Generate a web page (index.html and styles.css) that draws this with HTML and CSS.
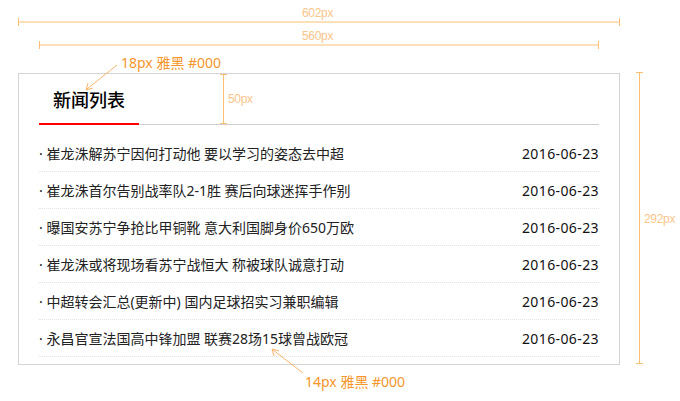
FILE: index.html
```html
<!DOCTYPE html>
<html lang="zh-CN">
<head>
<meta charset="utf-8">
<title>新闻列表</title>
<link rel="stylesheet" href="styles.css">
</head>
<body>
<div class="page">
  <div class="box">
    <div class="head">
      <h2 class="tab">新闻列表</h2>
    </div>
    <ul class="list">
      <li class="row"><span class="title">· 崔龙洙解苏宁因何打动他 要以学习的姿态去中超</span><span class="date">2016-06-23</span></li>
      <li class="row"><span class="title">· 崔龙洙首尔告别战率队2-1胜 赛后向球迷挥手作别</span><span class="date">2016-06-23</span></li>
      <li class="row"><span class="title">· 曝国安苏宁争抢比甲铜靴 意大利国脚身价650万欧</span><span class="date">2016-06-23</span></li>
      <li class="row"><span class="title">· 崔龙洙或将现场看苏宁战恒大 称被球队诚意打动</span><span class="date">2016-06-23</span></li>
      <li class="row"><span class="title">· 中超转会汇总(更新中) 国内足球招实习兼职编辑</span><span class="date">2016-06-23</span></li>
      <li class="row"><span class="title">· 永昌官宣法国高中锋加盟 联赛28场15球曾战欧冠</span><span class="date">2016-06-23</span></li>
    </ul>
  </div>
</div>
<svg class="notes" width="680" height="401" viewBox="0 0 680 401" xmlns="http://www.w3.org/2000/svg">
  <g class="dim">
    <line x1="18" y1="22" x2="619" y2="22"/>
    <line x1="18.5" y1="18" x2="18.5" y2="26"/>
    <line x1="619.5" y1="18" x2="619.5" y2="26"/>
    <line x1="39" y1="45" x2="598" y2="45"/>
    <line x1="39.5" y1="41" x2="39.5" y2="49"/>
    <line x1="598.5" y1="41" x2="598.5" y2="49"/>
    <line x1="223.5" y1="74" x2="223.5" y2="124"/>
    <line x1="220" y1="74.5" x2="227" y2="74.5"/>
    <line x1="220" y1="123.5" x2="227" y2="123.5"/>
    <line x1="639.5" y1="72" x2="639.5" y2="364"/>
    <line x1="636" y1="72.5" x2="643" y2="72.5"/>
    <line x1="636" y1="363.5" x2="643" y2="363.5"/>
  </g>
  <g class="dimtext">
    <text x="302" y="17">602px</text>
    <text x="302" y="40">560px</text>
    <text x="228" y="103">50px</text>
    <text x="644" y="223">292px</text>
  </g>
  <g class="arrow">
    <line x1="117" y1="65" x2="87" y2="89"/>
    <polyline points="88,83 86,90 93,88"/>
    <line x1="303" y1="373" x2="273" y2="350"/>
    <polyline points="279,351 272,349 274,356"/>
  </g>
  <g class="label">
    <text x="121" y="68">18px 雅黑 #000</text>
    <text x="305" y="387">14px 雅黑 #000</text>
  </g>
</svg>
</body>
</html>
```
FILE: styles.css
```css
html, body {
  margin: 0;
  padding: 0;
  background: #fff;
}
body {
  position: relative;
  width: 680px;
  height: 401px;
  overflow: hidden;
  font-family: "Noto Sans", "Noto Sans CJK SC", sans-serif;
}
.page {
  padding: 73px 0 0 18px;
}
.box {
  width: 560px;
  height: 283px;
  border: 1px solid #d4d4d4;
  padding: 0 20px 7px;
}
.head {
  display: flex;
  height: 50px;
  border-bottom: 1px solid #cfcfcf;
}
.tab {
  margin: 0 0 -1px;
  width: 100px;
  height: 49px;
  border-bottom: 2px solid #ff0000;
  font-family: "Noto Sans CJK SC", sans-serif;
  font-size: 18px;
  font-weight: 500;
  color: #000;
  line-height: 50px;
  text-align: center;
}
.list {
  list-style: none;
  margin: 10px 0 0;
  padding: 0;
}
.row {
  display: flex;
  justify-content: space-between;
  align-items: center;
  height: 36px;
  border-bottom: 1px dotted #e2e2e2;
  font-size: 14px;
  color: #222;
}
.date {
  color: #111;
  letter-spacing: 0.4px;
}
.notes {
  position: absolute;
  left: 0;
  top: 0;
  pointer-events: none;
}
.dim line {
  stroke: #fbbf73;
  stroke-width: 1;
}
.dimtext text {
  fill: #fac58a;
  font-family: "Liberation Sans", Arial, sans-serif;
  font-size: 12px;
  letter-spacing: -0.3px;
}
.arrow line, .arrow polyline {
  stroke: #f9b56a;
  stroke-width: 1;
  fill: none;
}
.label text {
  fill: #f5952a;
  font-family: "Noto Sans", "Noto Sans CJK SC", sans-serif;
  font-size: 14px;
}
```
